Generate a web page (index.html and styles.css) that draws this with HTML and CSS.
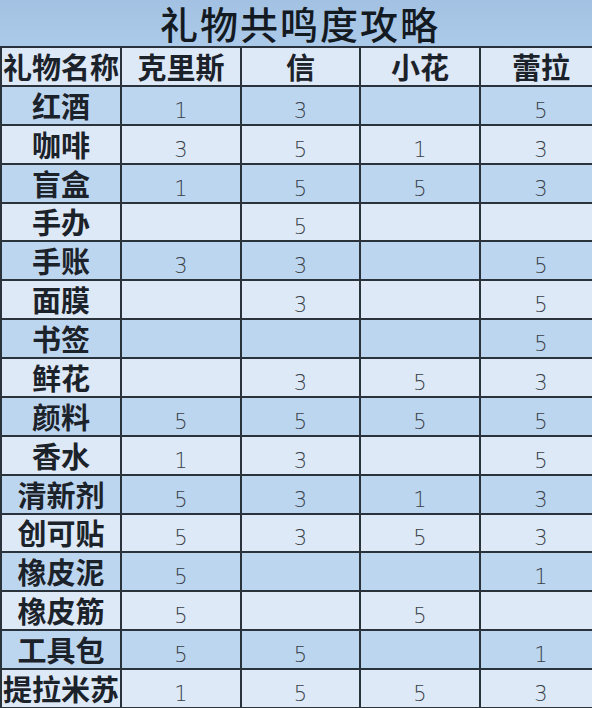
FILE: index.html
```html
<!DOCTYPE html>
<html lang="zh">
<head>
<meta charset="utf-8">
<title>礼物共鸣度攻略</title>
<link rel="stylesheet" href="styles.css">
</head>
<body>
<div class="sheet">
  <div class="title">礼物共鸣度攻略</div>
  <div class="grid">
    <div class="cell head name">礼物名称</div><div class="cell head">克里斯</div><div class="cell head">信</div><div class="cell head">小花</div><div class="cell head">蕾拉</div>

    <div class="cell name dark">红酒</div><div class="cell num dark">1</div><div class="cell num dark">3</div><div class="cell num dark"></div><div class="cell num dark">5</div>
    <div class="cell name">咖啡</div><div class="cell num">3</div><div class="cell num">5</div><div class="cell num">1</div><div class="cell num">3</div>
    <div class="cell name dark">盲盒</div><div class="cell num dark">1</div><div class="cell num dark">5</div><div class="cell num dark">5</div><div class="cell num dark">3</div>
    <div class="cell name">手办</div><div class="cell num"></div><div class="cell num">5</div><div class="cell num"></div><div class="cell num"></div>
    <div class="cell name dark">手账</div><div class="cell num dark">3</div><div class="cell num dark">3</div><div class="cell num dark"></div><div class="cell num dark">5</div>
    <div class="cell name">面膜</div><div class="cell num"></div><div class="cell num">3</div><div class="cell num"></div><div class="cell num">5</div>
    <div class="cell name dark">书签</div><div class="cell num dark"></div><div class="cell num dark"></div><div class="cell num dark"></div><div class="cell num dark">5</div>
    <div class="cell name">鲜花</div><div class="cell num"></div><div class="cell num">3</div><div class="cell num">5</div><div class="cell num">3</div>
    <div class="cell name dark">颜料</div><div class="cell num dark">5</div><div class="cell num dark">5</div><div class="cell num dark">5</div><div class="cell num dark">5</div>
    <div class="cell name">香水</div><div class="cell num">1</div><div class="cell num">3</div><div class="cell num"></div><div class="cell num">5</div>
    <div class="cell name dark">清新剂</div><div class="cell num dark">5</div><div class="cell num dark">3</div><div class="cell num dark">1</div><div class="cell num dark">3</div>
    <div class="cell name">创可贴</div><div class="cell num">5</div><div class="cell num">3</div><div class="cell num">5</div><div class="cell num">3</div>
    <div class="cell name dark">橡皮泥</div><div class="cell num dark">5</div><div class="cell num dark"></div><div class="cell num dark"></div><div class="cell num dark">1</div>
    <div class="cell name">橡皮筋</div><div class="cell num">5</div><div class="cell num"></div><div class="cell num">5</div><div class="cell num"></div>
    <div class="cell name dark">工具包</div><div class="cell num dark">5</div><div class="cell num dark">5</div><div class="cell num dark"></div><div class="cell num dark">1</div>
    <div class="cell name">提拉米苏</div><div class="cell num">1</div><div class="cell num">5</div><div class="cell num">5</div><div class="cell num">3</div>
  </div>
</div>
</body>
</html>
```
FILE: styles.css
```css
html, body {
  margin: 0;
  padding: 0;
  background: #dce8f5;
  overflow: hidden;
}

.sheet {
  width: 592px;
  height: 708px;
  overflow: hidden;
  font-family: "Noto Sans CJK SC", "Noto Sans", sans-serif;
}

.title {
  height: 46px;
  background: linear-gradient(180deg, #a3c2e3 0%, #abc9e8 100%);
  color: #141a22;
  font-size: 38px;
  font-weight: 500;
  line-height: 46px;
  text-align: center;
  letter-spacing: 2px;
  padding-left: 8px;
  box-sizing: border-box;
}

.grid {
  display: grid;
  grid-template-columns: 120px 120px 119px 120px 122px;
  grid-auto-rows: 38.88px;
  border-top: 2px solid #2a323c;
  border-left: 2px solid #2a323c;
  width: 620px;
}

.cell {
  box-sizing: border-box;
  border-right: 2px solid #2a323c;
  border-bottom: 2px solid #2a323c;
  background: #dde9f6;
  display: flex;
  align-items: flex-end;
  justify-content: center;
  white-space: nowrap;
}

.cell.dark {
  background: #bdd6ef;
}

.head,
.name {
  font-size: 29px;
  font-weight: 700;
  color: #1c222a;
  line-height: 30px;
  padding-bottom: 4px;
}

.num {
  font-family: "DejaVu Sans", sans-serif;
  font-weight: 200;
  font-size: 21px;
  color: #383f48;
  line-height: 26px;
  padding-bottom: 0;
}
```
